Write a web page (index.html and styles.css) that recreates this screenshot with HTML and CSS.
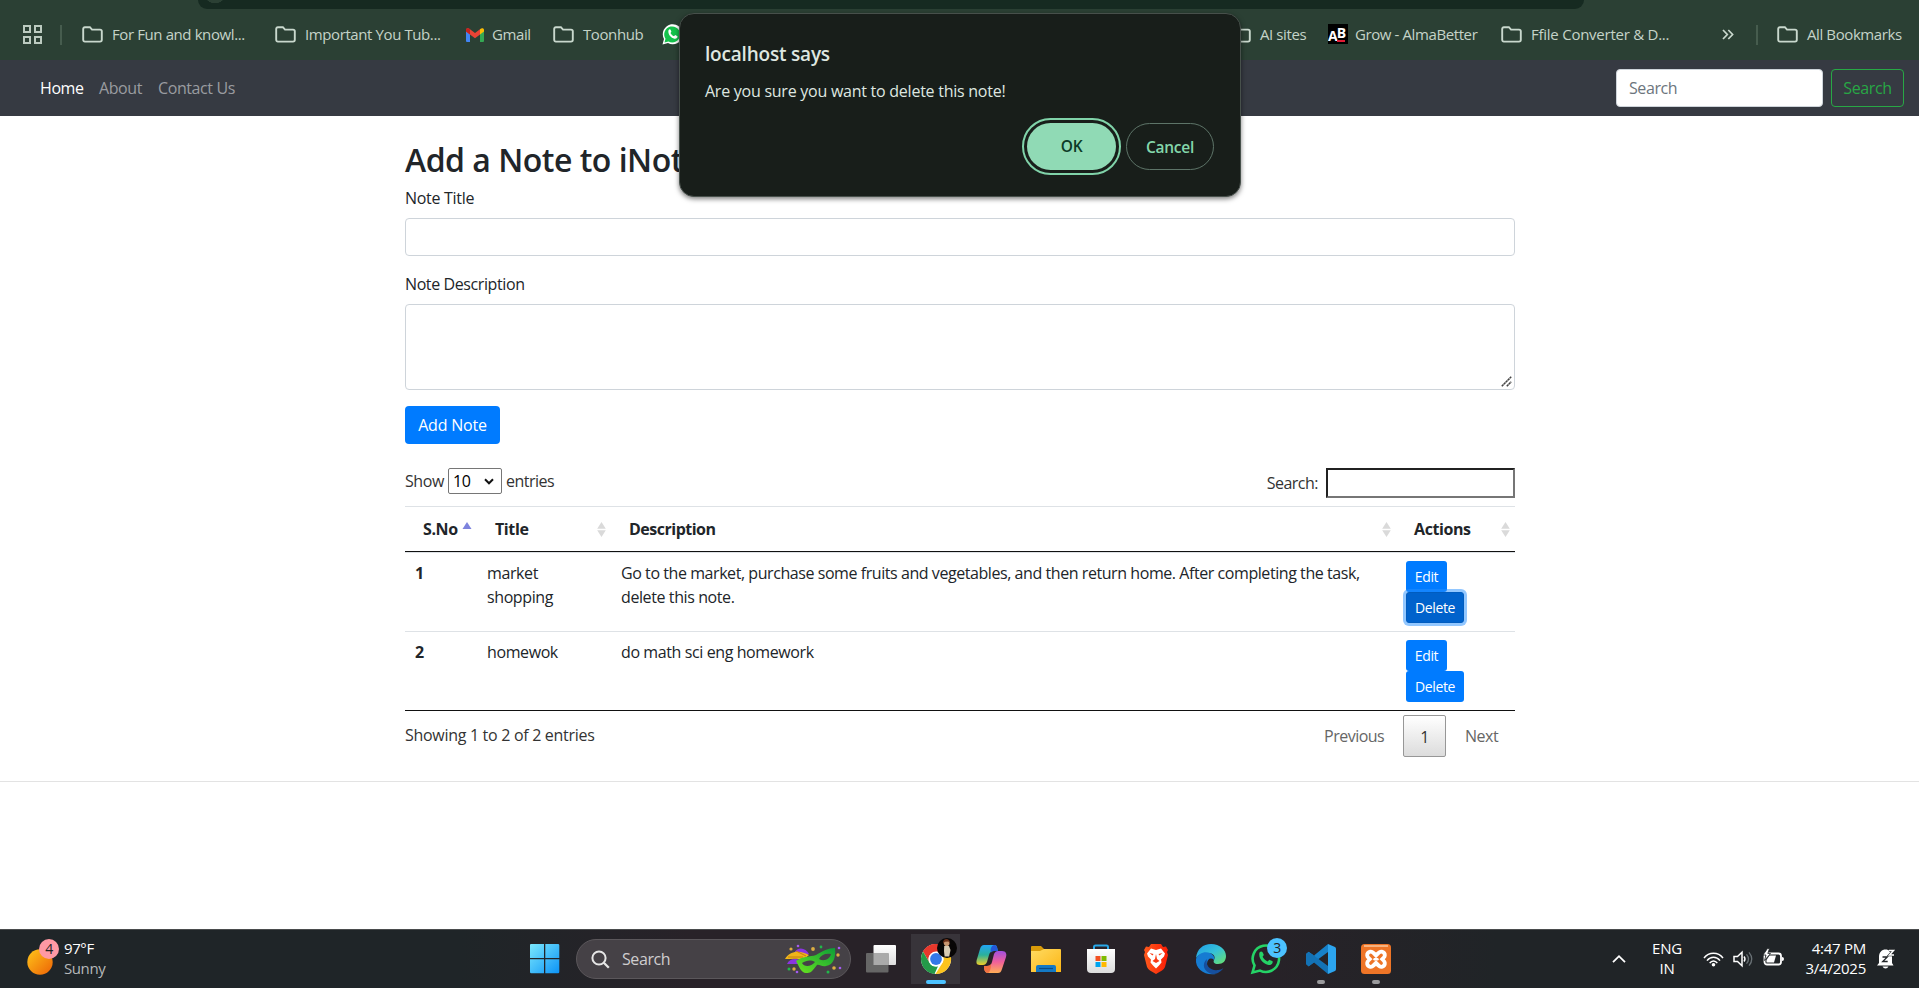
FILE: index.html
```html
<!DOCTYPE html>
<html lang="en">
<head>
<meta charset="utf-8">
<title>iNotes - Notes taking made easy</title>
<link rel="stylesheet" href="styles.css">
</head>
<body>
<svg class="defs" width="0" height="0" aria-hidden="true">
  <defs>
    <symbol id="folder" viewBox="0 0 21 17"><path d="M1.2 13.8V3c0-1 .7-1.8 1.7-1.8h5L10 3.6h8c1 0 1.8.7 1.8 1.7v8.5c0 1-.8 1.8-1.8 1.8H2.9c-1 0-1.7-.8-1.7-1.8z" fill="none" stroke="#c9d8cd" stroke-width="1.9"/></symbol>
    <linearGradient id="win" x1="0" y1="0" x2="1" y2="1"><stop offset="0" stop-color="#7be8fd"/><stop offset="1" stop-color="#0c93f6"/></linearGradient>
    <linearGradient id="sun" x1="0" y1="0" x2="1" y2="1"><stop offset="0" stop-color="#ffc61a"/><stop offset="1" stop-color="#ec6206"/></linearGradient>
    <linearGradient id="mask" x1="0" y1="1" x2="1" y2="0"><stop offset="0" stop-color="#6be51f"/><stop offset="1" stop-color="#0b9d38"/></linearGradient>
    <linearGradient id="cpa" x1="0" y1="0" x2="0" y2="1"><stop offset="0" stop-color="#22a5f5"/><stop offset=".5" stop-color="#2bb09b"/><stop offset="1" stop-color="#f0cf27"/></linearGradient>
    <linearGradient id="cpb" x1="0" y1="0" x2="0" y2="1"><stop offset="0" stop-color="#a04fe0"/><stop offset=".5" stop-color="#f0609a"/><stop offset="1" stop-color="#ffae55"/></linearGradient>
    <linearGradient id="fold" x1="0" y1="0" x2="1" y2="1"><stop offset="0" stop-color="#ffdb62"/><stop offset="1" stop-color="#fcb514"/></linearGradient>
    <linearGradient id="edgea" x1="0" y1="0" x2="1" y2="1"><stop offset="0" stop-color="#1f9be8"/><stop offset=".5" stop-color="#35c1d8"/><stop offset="1" stop-color="#6be26a"/></linearGradient>
    <linearGradient id="bag" x1="0" y1="0" x2="0" y2="1"><stop offset="0" stop-color="#fff"/><stop offset="1" stop-color="#dcdcdc"/></linearGradient>
    <linearGradient id="brave" x1="0" y1="0" x2="1" y2="0"><stop offset="0" stop-color="#ff5a1c"/><stop offset="1" stop-color="#f91d06"/></linearGradient>
    <linearGradient id="tv" x1="0" y1="0" x2="0" y2="1"><stop offset="0" stop-color="#fff"/><stop offset="1" stop-color="#dedede"/></linearGradient>
  </defs>
</svg>

<div class="screen">
  <header class="bookmarks">
    <div class="omnibox"></div>
    <div class="bm-row">
      <svg class="apps" width="19" height="19" viewBox="0 0 19 19"><g fill="none" stroke="#bccbc0" stroke-width="2"><path d="M1 1h6v6H1zM12 1h6v6h-6zM1 12h6v6H1zM12 12h6v6h-6z"/></g></svg>
      <span class="sep sep-a"></span>
      <span class="bm bm-1"><svg width="21" height="17"><use href="#folder"/></svg><span>For Fun and knowl...</span></span>
      <span class="bm bm-2"><svg width="21" height="17"><use href="#folder"/></svg><span>Important You Tub...</span></span>
      <span class="bm bm-3"><svg width="18" height="14" viewBox="0 0 18 14"><path d="M0 2v11q0 1 1 1h3V5z" fill="#4285f4"/><path d="M18 2v11q0 1-1 1h-3V5z" fill="#34a853"/><path d="M14 1.2 14 6.5 18 3.4V2c0-2-2.200-2.500-4-.8z" fill="#fbbc04"/><path d="M0 2C0 0 2.200-.5 4 1.200L9 5l5-3.800v5.300L9 10.200 0 3.400z" fill="#ea4335"/><path d="M0 2C0 0 2.200-.5 4 1.200v5.300L0 3.400z" fill="#c5221f"/></svg><span>Gmail</span></span>
      <span class="bm bm-4"><svg width="21" height="17"><use href="#folder"/></svg><span>Toonhub</span></span>
      <span class="bm bm-5"><svg width="21" height="21" viewBox="0 0 21 21"><path d="M.5 20.500 2 15A10 10 0 1 1 6 19z" fill="#fff"/><path d="m2.500 18.500 1-3.700a8 8 0 1 1 3 2.700z" fill="#14c24b"/><path d="M6.500 6.200c1-1.500 2-1 2.300 0l.6 1.500-.9 1.400c.8 1.600 1.900 2.600 3.500 3.200l1.200-1.200 2.300 1.200c.4 1.700-1.500 2.700-3 2.400-3.400-.6-7-4.700-6-8.500z" fill="#fff"/></svg></span>
      <span class="bm bm-6"><svg width="21" height="17"><use href="#folder"/></svg><span>AI sites</span></span>
      <span class="bm bm-7"><span class="ab"><b>A</b><b class="ab-b">B</b></span><span>Grow - AlmaBetter</span></span>
      <span class="bm bm-8"><svg width="21" height="17"><use href="#folder"/></svg><span class="wide">Ffile Converter &amp; D...</span></span>
      <svg class="more" width="12" height="11" viewBox="0 0 12 11"><path d="m1 1 4.300 4.500L1 10M6.300 1l4.300 4.500L6.300 10" fill="none" stroke="#c9d8cd" stroke-width="1.700"/></svg>
      <span class="sep sep-b"></span>
      <span class="bm bm-9"><svg width="21" height="17"><use href="#folder"/></svg><span>All Bookmarks</span></span>
    </div>
  </header>

  <nav class="navbar">
    <a class="nav-link active">Home</a>
    <a class="nav-link">About</a>
    <a class="nav-link nav-contact">Contact Us</a>
    <div class="nav-search"><div class="nav-input">Search</div><div class="nav-btn">Search</div></div>
  </nav>

  <main class="page">
    <div class="container">
      <h2>Add a Note to iNotes</h2>
      <label class="field-label lbl-title">Note Title</label>
      <div class="input"></div>
      <label class="field-label lbl-desc">Note Description</label>
      <div class="textarea"><svg width="11" height="11" viewBox="0 0 11 11"><path d="M.8 10.200 10.200.8M5.800 10.200l4.400-4.400" stroke="#444" stroke-width="1.600" stroke-dasharray="2.400 .4"/></svg></div>
      <div class="btn btn-add">Add Note</div>

      <div class="table-tools">
        <div class="length"><span class="t-show">Show</span><span class="select">10<svg width="10" height="7" viewBox="0 0 10 7"><path d="m1 1.300 4 4 4-4" fill="none" stroke="#111" stroke-width="2"/></svg></span><span class="t-entries">entries</span></div>
        <div class="filter"><span>Search:</span><span class="filter-input"></span></div>
      </div>

      <div class="table">
        <div class="row head">
          <div class="th">S.No<svg class="sort asc" width="10" height="7" viewBox="0 0 10 7"><path d="M5 0 9.500 7h-9z" fill="#7d83dd"/></svg></div>
          <div class="th">Title<svg class="sort" width="9" height="15" viewBox="0 0 9 15"><path d="M4.500 0 8.800 6.800H.2zM4.500 15 .2 8.200h8.600z" fill="#dadada"/></svg></div>
          <div class="th th-desc">Description<svg class="sort" width="9" height="15" viewBox="0 0 9 15"><path d="M4.500 0 8.800 6.800H.2zM4.500 15 .2 8.200h8.600z" fill="#dadada"/></svg></div>
          <div class="th">Actions<svg class="sort" width="9" height="15" viewBox="0 0 9 15"><path d="M4.500 0 8.800 6.800H.2zM4.500 15 .2 8.200h8.600z" fill="#dadada"/></svg></div>
        </div>
        <div class="row body">
          <div class="td num">1</div><div class="td">market<br>shopping</div>
          <div class="td td-desc"><span class="line1">Go to the market, purchase some fruits and vegetables, and then return home. After completing the task,</span><br>delete this note.</div>
          <div class="td actions"><div class="btn-sm edit">Edit</div><div class="btn-sm delete focus">Delete</div></div>
        </div>
        <div class="row body">
          <div class="td num">2</div><div class="td">homewok</div>
          <div class="td td-desc">do math sci eng homework</div>
          <div class="td actions"><div class="btn-sm edit">Edit</div><div class="btn-sm delete">Delete</div></div>
        </div>
      </div>
      <div class="table-foot">
        <div class="info">Showing 1 to 2 of 2 entries</div>
        <div class="pager"><span class="prev">Previous</span><span class="current">1</span><span class="next">Next</span></div>
      </div>
    </div>
    <hr>
  </main>

  <footer class="taskbar">
    <div class="weather">
      <div class="sun-wrap"><svg width="26" height="26"><circle cx="13" cy="13" r="12.700" fill="url(#sun)"/></svg><span class="badge pink">4</span></div>
      <div class="weather-text"><div>97°F</div><div class="dim">Sunny</div></div>
    </div>
    <svg class="start" width="30" height="30" viewBox="0 0 30 30"><path d="M0 1q0-1 1-1h13v14H0zM15.300 0H28q1.300 0 1.300 1.300V14h-14zM0 15.300h14v14H1.300Q0 29.300 0 28zM15.300 15.300h14V28q0 1.300-1.300 1.300H15.300z" fill="url(#win)"/></svg>
    <div class="tsearch">
      <svg width="19" height="19" viewBox="0 0 19 19"><circle cx="8" cy="8" r="6.600" fill="none" stroke="#e6e6e6" stroke-width="2"/><path d="m12.800 12.800 5 5" stroke="#e6e6e6" stroke-width="2.300"/></svg>
      <span>Search</span>
      <svg class="mask" width="57" height="30" viewBox="0 0 57 30">
        <path d="M9 9C13 2 21 4 24 10l-5 2zM2 20c2-5 8-6 13-4l-2 4z" fill="#8a35e0"/><path d="M0 15C5 6 16 6 24 11l-6 5C12 14 6 15 0 15z" fill="#efb51a"/><path d="m3 13 15 0M11 7l10 5" stroke="#c57c11" fill="none"/>
        <path fill-rule="evenodd" d="M11 17c6-5 14-4 20-6C38 7 43 4 50 4c1 8-1 17-9 18-4 1-7-2-9-1-3 3-5 9-11 8-5 0-7-7-10-12zm6 2c2 4 9 4 13-1-5-3-9-1-13 1zm17-4c5 3 11 0 12-5-6-1-10 1-12 5z" fill="url(#mask)"/>
        <g fill="#a45cf0"><circle cx="13" cy="2" r="1.300"/><circle cx="54" cy="4" r="1.300"/><circle cx="12" cy="28" r="1.300"/><circle cx="55" cy="24" r="1.300"/></g><g fill="#dcae42"><circle cx="6" cy="5" r="1.600"/><circle cx="28" cy="5" r="1.900"/><circle cx="53" cy="11" r="1.700"/><circle cx="9" cy="25" r="1.700"/><circle cx="49" cy="24" r="1.800"/></g><g fill="#20b94a"><circle cx="36" cy="3" r="1.400"/><circle cx="4" cy="25" r="1.500"/><circle cx="43" cy="28" r="1.500"/></g>
      </svg>
    </div>
    <div class="apps-row">
      <div class="app"><svg width="30" height="30" viewBox="0 0 30 30"><rect x="7.500" y="1" width="22.500" height="20" rx="1" fill="url(#tv)"/><rect x="0" y="9" width="22.500" height="19.500" rx="1" fill="#666" /><path d="M7.500 9h15v12h-15z" fill="#aaa"/></svg></div>
      <div class="app active-app"><svg width="30" height="30" viewBox="0 0 30 30"><circle cx="15" cy="15" r="15" fill="#fff"/><path d="M15 15 2 7.500A15 15 0 0 1 28 7.500H15z" fill="#e8382c"/><path d="M15 0A15 15 0 0 1 28 7.500H15A7.500 7.500 0 0 0 8.500 18.700L2 7.500A15 15 0 0 1 15 0z" fill="#e8382c"/><path d="M2 7.500 8.500 18.700A7.500 7.500 0 0 0 17 22.200L13.500 30A15 15 0 0 1 2 7.500z" fill="#249a49"/><path d="M28 7.500A15 15 0 0 1 14.500 30l7-11.300A7.500 7.500 0 0 0 15 7.500z" fill="#fcc41e"/><circle cx="15" cy="15" r="7.500" fill="#fff"/><circle cx="15" cy="15" r="5.900" fill="#3478e8"/></svg>
        <svg class="avatar" width="20" height="20" viewBox="0 0 20 20"><circle cx="10" cy="10" r="10" fill="#080606"/><path d="M7.200 8h4.800l1.500 4-1.300 6.500H7.600L7 13z" fill="#d8cbb4"/><circle cx="9.700" cy="5.300" r="2.800" fill="#c89670"/><path d="M6 5.500c-.5-6 7.500-6 7.100.3L11.500 3.500 8 3.800z" fill="#6c3019"/></svg><i class="run on"></i></div>
      <div class="app"><svg width="30" height="28" viewBox="0 0 30 28"><path d="M8 0h10c3 0 3 2 4 6h-4c-3 0-4 1-5 4l-2 7c-1 2-2 3-4 3H4c-4 0-4-3-3-6L4 4c1-3 2-4 4-4z" fill="url(#cpa)"/><path d="M18 0c3 0 3 2 4 6h-4c-2 0-3 1-3 2-1-4 0-7 3-8z" fill="#2358d8"/><path d="M22 28H12c-3 0-4-3-4-7h3c3 0 4-1 5-4l2-8c1-2 2-3 4-3h4c4 0 5 3 4 6l-4 12c-1 3-2 4-4 4z" fill="url(#cpb)"/><path d="M12 28c-3 0-4-3-4-7h3q3 0 4-2c0 4-1 8-3 9z" fill="#f07142"/></svg></div>
      <div class="app"><svg width="30" height="28" viewBox="0 0 30 28"><path d="M0 2q0-1 1-1h9l3 3v4H0z" fill="#d99b09"/><path d="M0 6h9l4-2h16q1 0 1 1v22H0z" fill="url(#fold)"/><path d="M5 27v-5q0-2 2-2h16q2 0 2 2v5z" fill="#1479c4"/><path d="M8 23.500h14" stroke="#0a4b85" stroke-width="1.200"/></svg></div>
      <div class="app"><svg width="30" height="30" viewBox="0 0 30 30"><path d="M8 6V3q0-1.500 1.500-1.500h11Q22 1.500 22 3v3" fill="none" stroke="#29a8e8" stroke-width="2"/><path d="M1 5h28v20q0 4-4 4H5q-4 0-4-4z" fill="url(#bag)"/><path d="M9.500 12h5v5h-5z" fill="#f25022"/><path d="M15.500 12h5v5h-5z" fill="#7fba00"/><path d="M9.500 18h5v5h-5z" fill="#00a4ef"/><path d="M15.500 18h5v5h-5z" fill="#ffb900"/></svg></div>
      <div class="app"><svg width="26" height="30" viewBox="0 0 26 30"><path d="m8 0-2 3-3-.5L1 6l1 2-1 3 3 12q1 2 3 3.500L13 30l6-3.500q2-1.500 3-3.500l3-12-1-3 1-2-2-3.500-3 .5-2-3z" fill="url(#brave)"/><path d="m13 6 5-1.500 4 5-1 3-3 3 .500 3-2.500 3-3 3-3-3-2.500-3 .5-3-3-3-1-3 4-5z" fill="#fff"/><path d="m6.500 9 4 1-1 1.500zm13 0-4 1 1 1.500zM13 10l1 5 2.500 2L13 19l-3.500-2 2.500-2zM8 13.500l2 2M18 13.500l-2 2" fill="#fa3a14"/></svg></div>
      <div class="app"><svg width="30" height="30" viewBox="0 0 30 30"><path d="M0 14C1 5 7 0 15 0c9 0 15 6 15 12 0 5-3 8-8 8-4 0-5-2-4-4 2-4-1-7-6-7C6 9 2 11 0 14z" fill="url(#edgea)"/><path d="M0 15C2 9 9 7 14 9c4 2 5 5 4 7-3-3-7-1-7 4s4 9 9 10C9 32-1 25 0 15z" fill="#167bd2"/><path d="M11 15c-2 7 4 12 11 11 2 0 4-1 5.500-2C24 29 20 30 16 30 8 28 5 20 11 15z" fill="#164f9e"/></svg></div>
      <div class="app"><svg width="30" height="30" viewBox="0 0 30 30"><path d="m1.500 28.500 2-7A13.200 13.200 0 1 1 9 26.600z" fill="none" stroke="#25d366" stroke-width="2.600"/><path d="M8.500 8.500c1.500-2 3-1 3.500.5l.8 2-1.200 1.800c1.100 2.300 2.700 3.700 5 4.600l1.700-1.700 3.300 1.600c.6 2.500-1.600 4-4 3.700-5-.8-10.700-6.500-9.100-12.500z" fill="#25d366"/></svg><span class="badge blue">3</span></div>
      <div class="app"><svg width="30" height="30" viewBox="0 0 30 30"><path d="m0 10 2.500-2.300L8 11.500 22 0v8L3 22l-3-2 9-8z" fill="#1781c9"/><path d="m0 20 2.500 2.500L8 18.500 22 30v-8L3 8l-3 2z" fill="#1372b5"/><path d="m22 0 7 3q1 .5 1 2v20q0 1.500-1 2l-7 3z" fill="#2ca5ef"/></svg><i class="run"></i></div>
      <div class="app"><svg width="30" height="30" viewBox="0 0 30 30"><rect width="30" height="30" rx="3.500" fill="#ee7527"/><path d="M3 1h24v2H3z" fill="#f6b27f"/><g fill="none" stroke-linecap="round"><path d="m9.500 11 11 8.500M20.500 11l-11 8.500" stroke="#fff" stroke-width="10.500"/><path d="m9.700 11.200 4 4-4 4M20.300 11.200l-4 4 4 4" stroke="#ee7527" stroke-width="3.200"/><path d="M13.500 15.200h3" stroke="#fff" stroke-width="2.400"/></g></svg><i class="run"></i></div>
    </div>
    <div class="tray">
      <svg class="chev" width="14" height="8" viewBox="0 0 14 8"><path d="m1 7.200 6-6 6 6" fill="none" stroke="#fff" stroke-width="1.800"/></svg>
      <div class="lang"><div>ENG</div><div>IN</div></div>
      <svg class="wifi" width="21" height="15" viewBox="0 0 21 15"><g fill="none" stroke="#fff" stroke-width="1.500"><path d="M1 6c5-6.300 14-6.300 19 0M4 8.600c3.600-4.600 9.400-4.600 13 0M6.700 11.200c2-3 5.600-3 7.600 0"/></g><circle cx="10.500" cy="12.800" r="1.800" fill="#fff"/></svg>
      <svg class="vol" width="20" height="16" viewBox="0 0 20 16"><path d="M1 5.500h3.500L9 1.300v13.400l-4.500-4.200H1z" fill="none" stroke="#fff" stroke-width="1.500"/><path d="M11 5.500q2 2.500 0 5" fill="none" stroke="#fff" stroke-width="1.400"/><path d="M13.500 3.300q4 4.700 0 9.400M16 1.300q5.500 6.700 0 13.400" fill="none" stroke="#687074" stroke-width="1.300"/></svg>
      <svg class="bat" width="21" height="17" viewBox="0 0 21 17"><rect x="1.500" y="4.500" width="16.500" height="11" rx="2.500" fill="none" stroke="#fff" stroke-width="1.800"/><path d="M19 8q2 0 2 2t-2 2z" fill="#fff"/><path d="M6.500 6.500h6.500L11 13.500H3.500V11z" fill="#fff"/><path d="M4.500-.5 0 6h3l-1.500 5.500L7.500 4.500H4.800L6.500-.5z" fill="#fff" stroke="#202427" stroke-width=".8"/></svg>
      <div class="clock"><div>4:47 PM</div><div>3/4/2025</div></div>
      <svg class="bell" width="18" height="20" viewBox="0 0 18 20"><path d="M2 14V8c0-5 3-7.500 6.500-7.500S15 3 15 8v6l1.500 2.500H0z" fill="#fff"/><path d="M5.500 17.500h6q-1 2-3 2t-3-2z" fill="#fff"/><path d="M12 1.500h4.500l-4 4.500H17" fill="none" stroke="#202427" stroke-width="2.600"/><path d="M12 1.500h4.500l-4 4.500H17" fill="none" stroke="#fff" stroke-width="1.500"/><path d="M5.500 8h4.800l-4.600 4.500h5" fill="none" stroke="#202427" stroke-width="1.300"/></svg>
    </div>
  </footer>

  <div class="dialog">
    <div class="dlg-title">localhost says</div>
    <div class="dlg-msg">Are you sure you want to delete this note!</div>
    <div class="dlg-actions"><div class="dlg-ok">OK</div><div class="dlg-cancel">Cancel</div></div>
  </div>
</div>
</body>
</html>
```
FILE: styles.css
```css
* { box-sizing: border-box; }
html { height: 988px; overflow: hidden; }
body { margin: 0; height: 988px; font-family: "Open Sans", "Noto Sans", sans-serif; font-size: 16px; line-height: 24px; letter-spacing: -0.4px; color: #212529; background: #fff; overflow: hidden; }
.defs { position: absolute; }
.screen { position: relative; width: 1919px; height: 988px; display: flex; flex-direction: column; overflow: hidden; }
svg { display: block; flex: none; overflow: visible; }

/* bookmarks bar */
.bookmarks { height: 60px; flex: none; background: #2b4034; color: #c5d3c8; font-size: 15px; }
.omnibox { width: 1386px; height: 9px; margin-left: 198px; background: #162a21; border-radius: 0 0 20px 20px; background-image: radial-gradient(circle at 17px -8px, #2b4034 11px, transparent 11.500px); }
.bm-row { display: flex; align-items: center; height: 51px; padding-left: 23px; white-space: nowrap; }
.bm { display: flex; align-items: center; gap: 9px; height: 24px; flex: none; }
.bm span { margin-top: -1px; }
.wide { letter-spacing: -0.25px; }
.sep { width: 2px; height: 20px; background: #465c4e; flex: none; }
.sep-a { margin: 0 20px 0 18px; }
.bm-1 { width: 193px; }
.bm-2 { width: 191px; }
.bm-3 { width: 87px; gap: 8px; }
.bm-4 { width: 109px; }
.bm-5 { width: 568px; }
.bm-6 { width: 98px; }
.bm-7 { width: 173px; gap: 7px; }
.bm-8 { width: 221px; }
.more { margin-right: 22px; }
.sep-b { margin-right: 19px; }
.ab { width: 20px; height: 20px; background: #000; color: #fff; display: flex; align-items: center; font-size: 14px; line-height: 20px; letter-spacing: -1px; overflow: hidden; }
.ab b { padding-top: 3px; }
.ab .ab-b { padding-top: 0; line-height: 13px; height: 16px; border-bottom: 2px solid #e21b35; }

/* site navigation */
.navbar { height: 56px; flex: none; background: #363a42; display: flex; align-items: center; padding: 0 15px 0 40px; }
.nav-link { color: #9a9ca0; width: 59px; }
.nav-link.active { color: #fff; }
.nav-contact { width: 100px; }
.nav-search { margin-left: auto; display: flex; gap: 8px; }
.nav-input { width: 207px; height: 38px; background: #fff; border: 1px solid #ced4da; border-radius: 4px; padding: 6px 12px; color: #6c757d; }
.nav-btn { width: 73px; height: 38px; border: 1px solid #28a745; border-radius: 4px; color: #28a745; text-align: center; line-height: 36px; }

/* page */
.page { flex: 1; min-height: 0; }
.container { width: 1110px; margin: 0 auto 0 405px; padding-top: 24px; }
h2 { margin: 0; font-size: 32px; line-height: 40px; height: 42px; font-weight: 600; letter-spacing: -0.500px; white-space: nowrap; }
.field-label { display: block; height: 24px; }
.lbl-title { margin: 4px 0 8px; letter-spacing: -0.300px; }
.input { height: 38px; border: 1px solid #ced4da; border-radius: 4px; }
.lbl-desc { margin: 16px 0 8px; }
.textarea { height: 86px; border: 1px solid #ced4da; border-radius: 4px; display: flex; justify-content: flex-end; align-items: flex-end; padding: 2px; }
.btn-add { width: 95px; height: 38px; margin-top: 16px; border-radius: 4px; background: #007bff; color: #fff; text-align: center; line-height: 38px; letter-spacing: -0.200px; }
.table-tools { display: flex; justify-content: space-between; height: 62px; padding-top: 24px; color: #333; }
.length { display: flex; align-items: center; height: 26px; }
.t-show { width: 43px; }
.select { width: 54px; height: 26px; border: 1px solid #767676; border-radius: 2px; padding: 0 7px 0 4px; display: flex; align-items: center; justify-content: space-between; color: #000; }
.t-entries { margin-left: 4px; letter-spacing: -0.500px; }
.filter { display: flex; align-items: center; height: 30px; gap: 8px; letter-spacing: -0.500px; }
.filter-input { width: 189px; height: 30px; border: 2px inset #767676; }

.table { border-top: 1px solid #dee2e6; border-bottom: 1px solid #111; }
.row { display: grid; grid-template-columns: 72px 134px 785px 119px; }
.head { height: 45px; border-bottom: 1px solid #111; }
.th { display: flex; align-items: center; justify-content: space-between; padding: 0 5px 0 18px; font-weight: 700; }
.th-desc { letter-spacing: -0.500px; }
.th .asc { margin-bottom: 8px; }
.body { height: 79px; border-top: 1px solid #dee2e6; }
.td { padding: 8px 10px 0; white-space: nowrap; }
.line1 { letter-spacing: -0.435px; }
.num { font-weight: 700; }
.actions { display: flex; flex-direction: column; align-items: flex-start; }
.btn-sm { height: 31px; border-radius: 3px; background: #007bff; color: #fff; font-size: 14px; line-height: 32px; text-align: center; flex: none; }
.edit { width: 41px; }
.delete { width: 58px; }
.delete.focus { background: #0062cc; border: 1px solid #005cbf; line-height: 30px; box-shadow: 0 0 0 3px rgba(38, 143, 255, .5); }
.table-foot { display: flex; justify-content: space-between; height: 70px; padding-top: 4px; }
.info { padding-top: 8px; color: #333; letter-spacing: -0.300px; }
.pager { display: flex; height: 43px; line-height: 42px; color: #666; letter-spacing: -0.500px; }
.prev { width: 79px; }
.current { width: 43px; height: 42px; border: 1px solid #979797; border-radius: 2px; background: linear-gradient(#fff, #dcdcdc); color: #333; text-align: center; }
.next { width: 69px; padding-left: 19px; }
hr { margin: 0; border: 0; border-top: 1px solid #e3e3e3; }

/* native dialog */
.dialog { position: absolute; left: 679px; top: 13px; width: 562px; height: 184px; border: 1px solid #47504b; border-radius: 15px; background: #181e1a; box-shadow: 0 2px 5px rgba(0, 0, 0, .5); padding: 26px 26px 0 25px; color: #dfe7e0; }
.dlg-title { font-size: 19px; line-height: 28px; font-weight: 600; letter-spacing: -0.200px; }
.dlg-msg { margin-top: 12px; line-height: 22px; letter-spacing: -0.250px; }
.dlg-actions { display: flex; justify-content: flex-end; gap: 10px; margin-top: 21px; font-size: 15.500px; font-weight: 600; line-height: 46px; text-align: center; letter-spacing: -0.300px; }
.dlg-ok { width: 89px; height: 47px; border-radius: 24px; background: #90dab5; color: #0c3b27; outline: 2px solid #80d3a9; outline-offset: 3px; }
.dlg-cancel { width: 88px; height: 47px; border: 1px solid #5d7468; border-radius: 24px; color: #84d7ab; }

/* taskbar */
.taskbar { position: relative; height: 59px; flex: none; border-top: 1px solid #4a4c4d; background: linear-gradient(90deg, #1f2528 0, #1f2528 24%, #282228 36%, #282228 65%, #202427 78%, #202427 100%); display: flex; align-items: center; color: #fff; font-size: 15px; line-height: 20px; }
.weather { display: flex; width: 530px; padding-left: 27px; gap: 11px; }
.weather-text { margin-top: -3px; }
.sun-wrap { position: relative; padding-top: 8px; }
.badge { position: absolute; width: 20px; height: 20px; border-radius: 50%; text-align: center; color: #222; font-size: 14px; line-height: 20px; }
.pink { left: 12px; top: -2px; background: #ff99a4; }
.blue { left: 29px; top: 8px; background: #4cc2ff; }
.dim { color: #b6b9ba; }
.tsearch { display: flex; align-items: center; width: 275px; height: 40px; margin-left: 16px; padding: 0 8px 0 14px; border: 1px solid #5b575b; border-radius: 20px; background: #454146; color: #cfcdcf; font-size: 16px; }
.tsearch span { margin-left: 12px; }
.mask { margin-left: auto; }
.apps-row { display: flex; margin-left: 2px; }
.app { position: relative; width: 55px; height: 58px; display: flex; align-items: center; justify-content: center; }
.active-app { background: linear-gradient(#38343a, #38343a) center / 49px 50px no-repeat; }
.avatar { position: absolute; left: 29px; top: 8px; }
.run { position: absolute; bottom: 4px; left: 24px; width: 8px; height: 4px; border-radius: 2px; background: #9a9a9c; }
.run.on { left: 18px; width: 20px; background: #4cc2ff; }
.tray { display: flex; align-items: center; margin-left: auto; padding-right: 24px; }
.lang { width: 48px; margin-left: 17px; margin-right: 12px; text-align: center; }
.lang, .clock { margin-top: -2px; letter-spacing: -0.250px; }
.vol { margin-left: 9px; }
.bat { margin-left: 10px; margin-top: -3px; }
.clock { width: 82px; text-align: right; }
.bell { margin-left: 11px; }
```
